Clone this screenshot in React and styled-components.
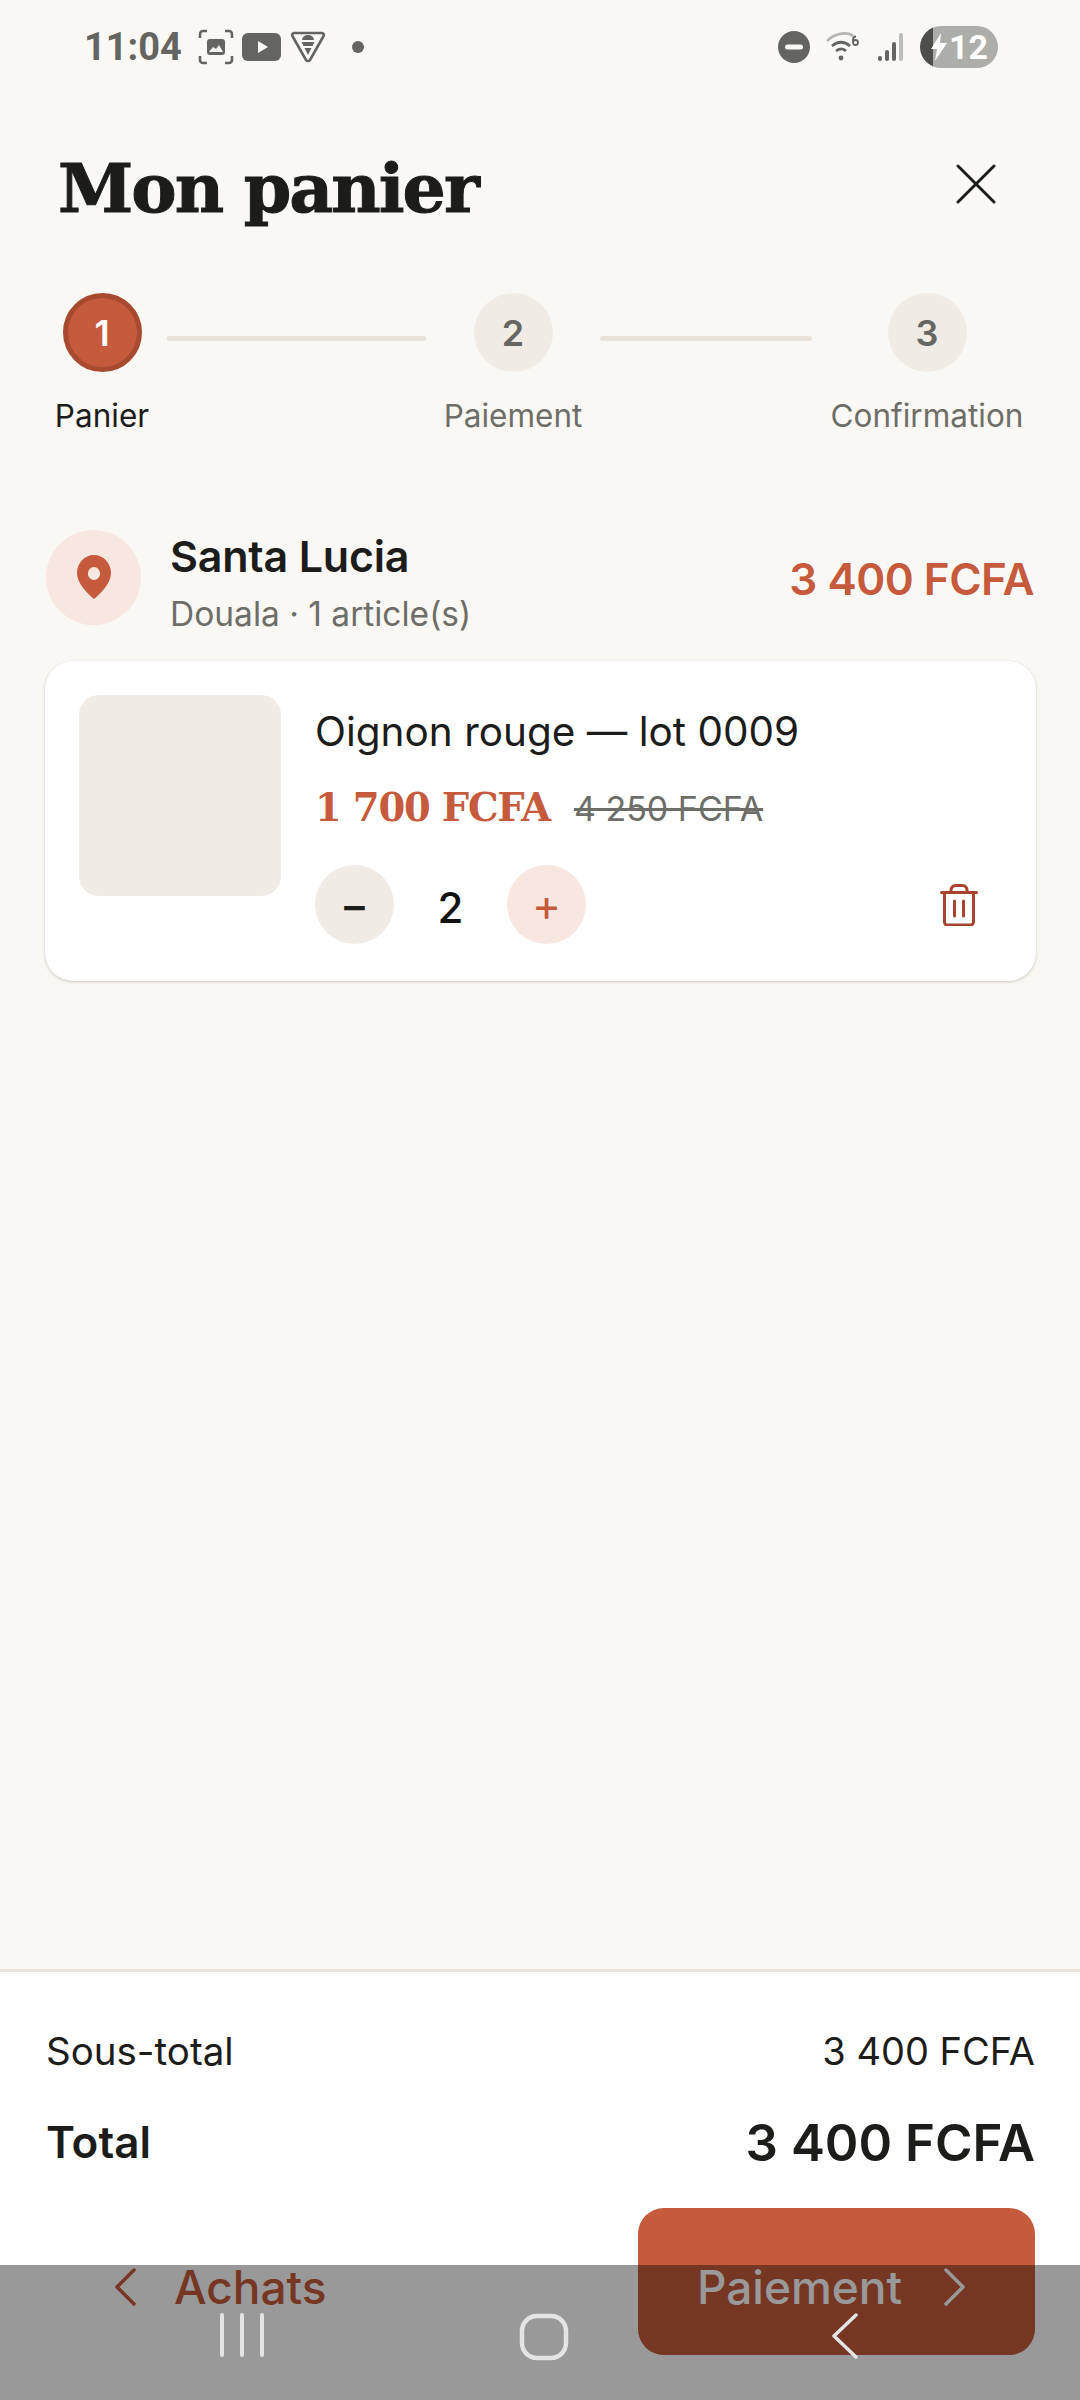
import React from 'react';
import styled, { createGlobalStyle } from 'styled-components';

const sans = `"Inter", "Noto Sans", "Liberation Sans", sans-serif`;
const serif = `"DejaVu Serif", "Liberation Serif", serif`;

const Global = createGlobalStyle`
  html, body { margin: 0; padding: 0; background: #faf8f4; }
  * { box-sizing: border-box; }
`;

const Screen = styled.div`
  position: relative;
  width: 1080px;
  height: 2400px;
  background: #faf8f4;
  font-family: ${sans};
  color: #1c1c1a;
  display: flex;
  flex-direction: column;
  overflow: hidden;
`;

const StatusBar = styled.div`
  height: 94px;
  padding: 0 82px 0 84px;
  display: flex;
  align-items: center;
  justify-content: space-between;
`;

const StatusGroup = styled.div`
  display: flex;
  align-items: center;
`;

const Clock = styled.span`
  font-family: "Roboto", ${sans};
  font-size: 38px;
  font-weight: 700;
  color: #646461;
  margin-right: 16px;
`;

const Battery = styled.div`
  width: 78px;
  height: 42px;
  border-radius: 21px;
  background: linear-gradient(90deg, #4e4e4b 0 13px, #adadaa 13px);
  color: #fff;
  font-family: "Roboto", ${sans};
  font-size: 34px;
  font-weight: 700;
  display: flex;
  align-items: center;
  justify-content: flex-end;
  padding-right: 10px;
  margin-left: 14px;
  position: relative;
`;

const Header = styled.div`
  height: 90px;
  margin-top: 49px;
  padding: 0 84px 0 58px;
  display: flex;
  align-items: center;
  justify-content: space-between;
`;

const Title = styled.h1`
  margin: 0;
  font-family: ${serif};
  font-size: 68px;
  font-weight: 700;
  letter-spacing: -2px;
  -webkit-text-stroke: 1px #1c1c1a;
  color: #1c1c1a;
`;

const CloseIcon = styled.svg`
  margin-bottom: 8px;
`;

const Stepper = styled.div`
  margin-top: 60px;
  padding: 0 16px 0 56px;
  display: flex;
  align-items: flex-start;
`;

const Step = styled.div`
  display: flex;
  flex-direction: column;
  align-items: center;
  gap: 24px;
  width: ${(p) => p.$width}px;
  flex: none;
`;

const StepDot = styled.div`
  width: 79px;
  height: 79px;
  border-radius: 50%;
  display: flex;
  align-items: center;
  justify-content: center;
  font-size: 36px;
  font-weight: 600;
  background: ${(p) => (p.$active ? '#c55a3c' : '#f0ece5')};
  color: ${(p) => (p.$active ? '#fff' : '#666662')};
  border: ${(p) => (p.$active ? '5px solid #a84a30' : 'none')};
`;

const StepLabel = styled.div`
  font-size: 31.5px;
  white-space: nowrap;
  color: ${(p) => (p.$active ? '#1c1c1a' : '#6e6e69')};
`;

const StepLine = styled.div`
  flex: none;
  width: ${(p) => p.$width}px;
  height: 5px;
  margin: 43px 0 0 ${(p) => p.$left}px;
  background: #e8e2d8;
  border-radius: 3px;
`;

const Shop = styled.div`
  margin-top: 85px;
  padding: 0 46px;
  display: flex;
  align-items: center;
`;

const PinCircle = styled.div`
  width: 95px;
  height: 95px;
  border-radius: 50%;
  background: #f8e6e0;
  display: flex;
  align-items: center;
  justify-content: center;
  margin-right: 29px;
  flex: none;
`;

const ShopText = styled.div`
  flex: 1;
  display: flex;
  flex-direction: column;
  gap: 12px;
  padding-top: 10px;
`;

const ShopName = styled.div`
  font-size: 43px;
  font-weight: 600;
  letter-spacing: -0.2px;
`;

const ShopMeta = styled.div`
  font-size: 33.5px;
  color: #6e6e69;
`;

const ShopTotal = styled.div`
  font-size: 44px;
  font-weight: 600;
  color: #c55a3c;
  letter-spacing: -0.5px;
  padding-top: 4px;
`;

const Card = styled.div`
  margin: 27px 44px 0 45px;
  height: 320px;
  padding: 34px;
  background: #fff;
  border-radius: 28px;
  box-shadow: 0 1px 3px rgba(60, 50, 30, 0.25);
  display: flex;
`;

const Thumb = styled.div`
  width: 202px;
  height: 201px;
  border-radius: 20px;
  background: #f0ece5;
  margin-right: 34px;
  flex: none;
`;

const ItemBody = styled.div`
  flex: 1;
  display: flex;
  flex-direction: column;
`;

const ItemName = styled.div`
  font-size: 40.5px;
  margin-top: 12px;
`;

const PriceRow = styled.div`
  display: flex;
  align-items: baseline;
  gap: 24px;
  margin-top: 29px;
`;

const Price = styled.span`
  font-family: ${serif};
  font-size: 38.5px;
  font-weight: 700;
  letter-spacing: -1.2px;
  color: #c55a3c;
`;

const OldPrice = styled.span`
  font-size: 34px;
  color: #6e6e69;
  text-decoration: line-through;
`;

const QtyRow = styled.div`
  display: flex;
  align-items: center;
  margin-top: 35px;
`;

const QtyButton = styled.div`
  width: 79px;
  height: 79px;
  border-radius: 50%;
  display: flex;
  align-items: center;
  justify-content: center;
  font-size: 44px;
  font-weight: ${(p) => (p.$accent ? 400 : 500)};
  background: ${(p) => (p.$accent ? '#f8e6e0' : '#f0ece5')};
  color: ${(p) => (p.$accent ? '#c55a3c' : '#1c1c1a')};
`;

const Qty = styled.div`
  width: 113px;
  text-align: center;
  font-size: 42px;
  font-weight: 500;
  color: #111;
  padding-top: 6px;
`;

const TrashSlot = styled.div`
  margin-left: auto;
  display: flex;
  margin-right: 24px;
`;

const Spacer = styled.div`
  flex: 1;
`;

const Footer = styled.div`
  height: 431px;
  background: #fff;
  border-top: 3px solid #e8e4da;
  padding: 54px 45px 0 46px;
  display: flex;
  flex-direction: column;
`;

const TotalRow = styled.div`
  display: flex;
  justify-content: space-between;
  align-items: center;
  height: ${(p) => p.$height}px;
  margin-top: ${(p) => p.$top || 0}px;
  font-size: ${(p) => p.$size}px;
  font-weight: ${(p) => p.$weight || 400};
`;

const TotalAmount = styled.span`
  font-size: ${(p) => p.$size}px;
`;

const Actions = styled.div`
  margin-top: 36px;
  display: flex;
  justify-content: space-between;
  align-items: flex-start;
`;

const BackButton = styled.div`
  display: flex;
  align-items: center;
  gap: 36px;
  padding: 51px 0 0 66px;
  font-size: 46px;
  font-weight: 500;
  color: #c55a3c;
`;

const PayButton = styled.div`
  width: 397px;
  height: 147px;
  border-radius: 26px;
  background: #c55a3c;
  color: #fff;
  display: flex;
  align-items: center;
  justify-content: center;
  gap: 40px;
  font-size: 46px;
  font-weight: 500;
  padding: 10px 8px 0 0;
`;

const NavOverlay = styled.div`
  position: absolute;
  left: 0;
  right: 0;
  bottom: 0;
  height: 135px;
  background: rgba(0, 0, 0, 0.4);
  display: flex;
  justify-content: space-between;
  align-items: flex-start;
  padding: 48px 221px 0 219px;
`;

const HomeIcon = styled.svg`
  margin-right: 8px;
`;

const Chevron = ({ dir, color }) => (
  <svg width="26" height="40" viewBox="0 0 26 40" fill="none">
    <path
      d={dir === 'left' ? 'M22 3 L5 20 L22 37' : 'M4 3 L21 20 L4 37'}
      stroke={color}
      strokeWidth="3.5"
      strokeLinecap="round"
      strokeLinejoin="round"
    />
  </svg>
);

const TrashIcon = () => (
  <svg width="38" height="42" viewBox="0 0 38 42" fill="none">
    <path
      d="M1.5 8.5h35M4.500 8.5V38a3 3 0 0 0 3 3h23a3 3 0 0 0 3-3V8.5M11 8.5V6a4.500 4.500 0 0 1 4.500-4.500h7A4.500 4.500 0 0 1 27 6v2.5M14.500 17v15M23.500 17v15"
      stroke="#a8432f"
      strokeWidth="3"
      strokeLinecap="round"
    />
  </svg>
);

const ScanIcon = () => (
  <svg width="36" height="36" viewBox="0 0 36 36" fill="none">
    <path d="M2 9V5a3 3 0 0 1 3-3h4M27 2h4a3 3 0 0 1 3 3v4M34 27v4a3 3 0 0 1-3 3h-4M9 34H5a3 3 0 0 1-3-3v-4" stroke="#646461" strokeWidth="2.6" />
    <rect x="9" y="10" width="18" height="16" rx="3" fill="#646461" />
    <path d="M11 23l4-5 3 2 3-4 4 7z" fill="#faf8f4" />
  </svg>
);

const PlayIcon = () => (
  <svg width="40" height="30" viewBox="0 0 40 30" style={{ marginLeft: 8 }}>
    <rect width="39" height="28" y="1" rx="6" fill="#646461" />
    <path d="M16 9l10 6-10 6z" fill="#faf8f4" />
  </svg>
);

const ShieldIcon = () => (
  <svg width="36" height="34" viewBox="0 0 36 34" fill="none" style={{ marginLeft: 8 }}>
    <path d="M4 3h28a2 2 0 0 1 1.600 3L20 30a2.400 2.400 0 0 1-4 0L2.400 6A2 2 0 0 1 4 3z" stroke="#646461" strokeWidth="2.6" />
    <path d="M12 10a6 5 0 0 1 12 0zM11.500 12h13l-2 4h-9zM14.500 18h7L18 25z" fill="#646461" />
  </svg>
);

const DndIcon = () => (
  <svg width="32" height="32" viewBox="0 0 32 32" style={{ marginRight: 16 }}>
    <circle cx="16" cy="16" r="16" fill="#646461" />
    <rect x="7" y="13.5" width="18" height="5" rx="2.5" fill="#faf8f4" />
  </svg>
);

const WifiIcon = () => (
  <svg width="38" height="32" viewBox="0 0 38 32" fill="none">
    <path d="M1 10C10 1 22 1 27 5" stroke="#b5b5b2" strokeWidth="2.6" />
    <path d="M6 15c6-5 12-5 18 0" stroke="#646461" strokeWidth="2.8" />
    <path d="M10 20c4-3 7-3 10 0" stroke="#646461" strokeWidth="2.8" />
    <circle cx="15" cy="27" r="2.4" fill="#646461" />
    <path d="M30 5.500a3 3 0 0 0-3 3v3a2.500 2.500 0 0 0 5 0 2.500 2.500 0 0 0-5 0" stroke="#646461" strokeWidth="1.8" />
  </svg>
);

const SignalIcon = () => (
  <svg width="28" height="30" viewBox="0 0 28 30" style={{ marginLeft: 14 }}>
    <rect x="0" y="24" width="4" height="5" rx="2" fill="#646461" />
    <rect x="7" y="18" width="4" height="11" rx="2" fill="#646461" />
    <rect x="14" y="10" width="4" height="19" rx="2" fill="#646461" />
    <rect x="21" y="1" width="4" height="28" rx="2" fill="#bcbcb9" />
  </svg>
);

const Bolt = () => (
  <svg width="18" height="28" viewBox="0 0 18 28" style={{ position: 'absolute', left: 10, top: 7 }}>
    <path d="M11 0L1 16h6L5 28 17 10h-7z" fill="#fff" />
  </svg>
);

export default function App() {
  return (
    <>
      <Global />
      <Screen>
        <StatusBar>
          <StatusGroup>
            <Clock>11:04</Clock>
            <ScanIcon />
            <PlayIcon />
            <ShieldIcon />
            <svg width="12" height="12" style={{ marginLeft: 26 }}>
              <circle cx="6" cy="6" r="6" fill="#646461" />
            </svg>
          </StatusGroup>
          <StatusGroup>
            <DndIcon />
            <WifiIcon />
            <SignalIcon />
            <Battery>
              <Bolt />
              12
            </Battery>
          </StatusGroup>
        </StatusBar>

        <Header>
          <Title>Mon panier</Title>
          <CloseIcon width="40" height="40" viewBox="0 0 40 40" fill="none">
            <path d="M2 2 L38 38 M38 2 L2 38" stroke="#1c1c1a" strokeWidth="3" strokeLinecap="round" />
          </CloseIcon>
        </Header>

        <Stepper>
          <Step $width={92}>
            <StepDot $active>1</StepDot>
            <StepLabel $active>Panier</StepLabel>
          </Step>
          <StepLine $width={259} $left={19} />
          <Step $width={174}>
            <StepDot>2</StepDot>
            <StepLabel>Paiement</StepLabel>
          </Step>
          <StepLine $width={212} $left={0} />
          <Step $width={230}>
            <StepDot>3</StepDot>
            <StepLabel>Confirmation</StepLabel>
          </Step>
        </Stepper>

        <Shop>
          <PinCircle>
            <svg width="34" height="44" viewBox="0 0 36 44" preserveAspectRatio="none">
              <path
                fillRule="evenodd"
                d="M18 0C8 0 0 8 0 18c0 11 12 21 18 26 6-5 18-15 18-26C36 8 28 0 18 0zm0 12a6.500 6.500 0 1 1 0 13 6.500 6.500 0 0 1 0-13z"
                fill="#c55a3c"
              />
            </svg>
          </PinCircle>
          <ShopText>
            <ShopName>Santa Lucia</ShopName>
            <ShopMeta>Douala · 1 article(s)</ShopMeta>
          </ShopText>
          <ShopTotal>3 400 FCFA</ShopTotal>
        </Shop>

        <Card>
          <Thumb />
          <ItemBody>
            <ItemName>Oignon rouge — lot 0009</ItemName>
            <PriceRow>
              <Price>1 700 FCFA</Price>
              <OldPrice>4 250 FCFA</OldPrice>
            </PriceRow>
            <QtyRow>
              <QtyButton>−</QtyButton>
              <Qty>2</Qty>
              <QtyButton $accent>+</QtyButton>
              <TrashSlot>
                <TrashIcon />
              </TrashSlot>
            </QtyRow>
          </ItemBody>
        </Card>

        <Spacer />

        <Footer>
          <TotalRow $height={50} $size={38.5}>
            <span>Sous-total</span>
            <TotalAmount $size={38}>3 400 FCFA</TotalAmount>
          </TotalRow>
          <TotalRow $height={60} $top={36} $size={44} $weight={600}>
            <span>Total</span>
            <TotalAmount $size={51}>3 400 FCFA</TotalAmount>
          </TotalRow>
          <Actions>
            <BackButton>
              <Chevron dir="left" color="#c55a3c" />
              Achats
            </BackButton>
            <PayButton>
              Paiement
              <Chevron dir="right" color="#fff" />
            </PayButton>
          </Actions>
        </Footer>

        <NavOverlay>
          <svg width="46" height="44" viewBox="0 0 46 44" fill="none">
            <path d="M3 2v40M23 2v40M43 2v40" stroke="#e4e4e4" strokeWidth="4" strokeLinecap="round" />
          </svg>
          <HomeIcon width="50" height="48" viewBox="0 0 50 48" fill="none">
            <rect x="3" y="3" width="44" height="42" rx="15" stroke="#e4e4e4" strokeWidth="4.5" />
          </HomeIcon>
          <svg width="28" height="46" viewBox="0 0 28 46" fill="none">
            <path d="M25 2 L3 23 L25 44" stroke="#e4e4e4" strokeWidth="3.5" strokeLinecap="round" strokeLinejoin="round" />
          </svg>
        </NavOverlay>
      </Screen>
    </>
  );
}
